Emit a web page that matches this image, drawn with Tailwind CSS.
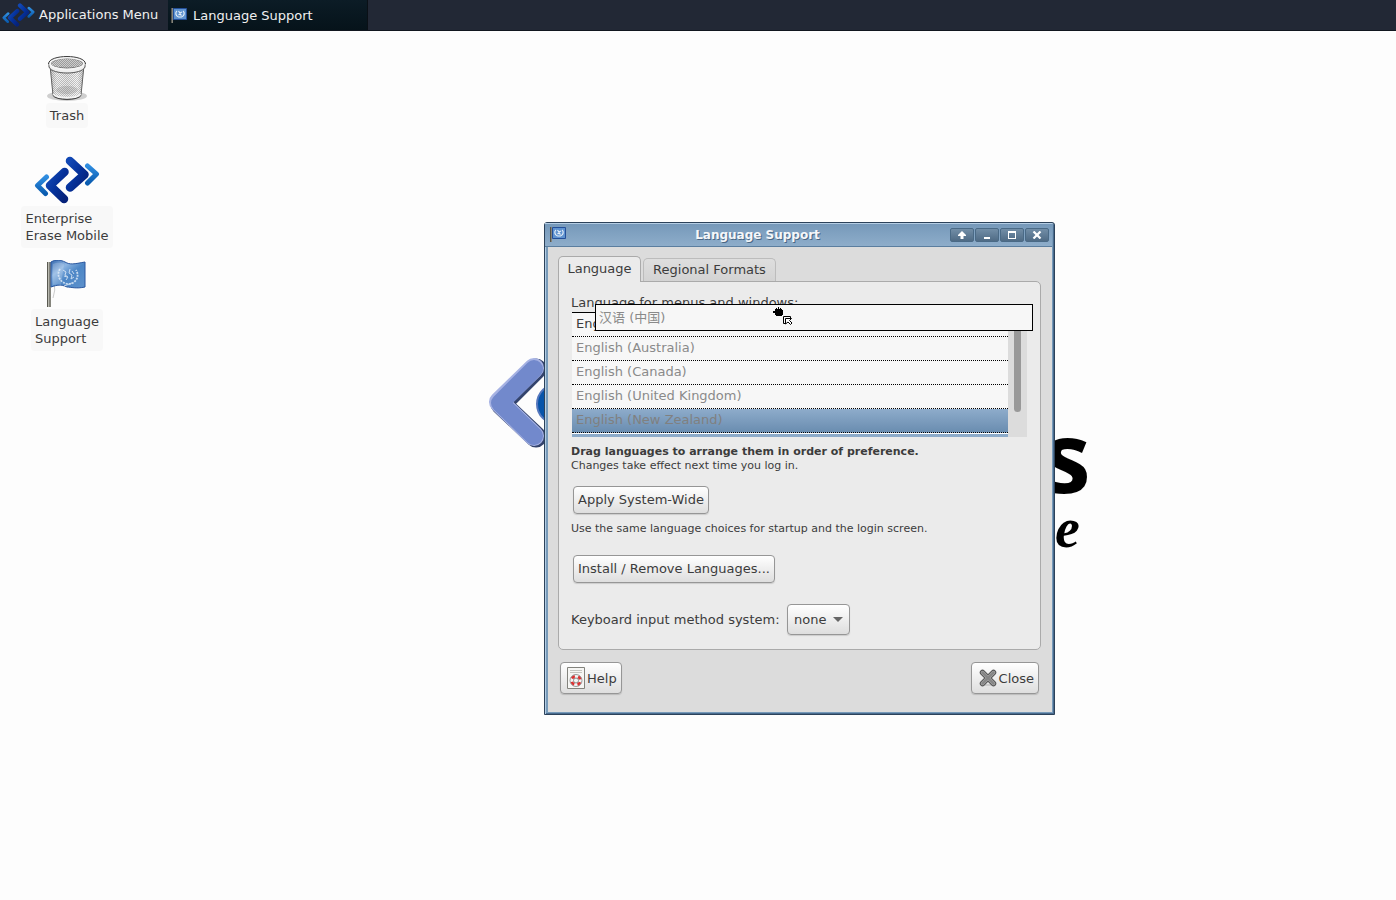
<!DOCTYPE html>
<html lang="en">
<head>
<meta charset="utf-8">
<title>Language Support</title>
<script src="https://cdn.jsdelivr.net/npm/@tailwindcss/browser@4"></script>
</head>
<body class="flex min-h-screen flex-col overflow-hidden bg-[#fdfdfd] font-['DejaVu_Sans','Noto_Sans_CJK_SC',sans-serif] text-[13px] leading-[17px] text-[#3c3c3c]">
<svg class="absolute h-0 w-0" aria-hidden="true">
  <defs>
    <linearGradient id="navy" x1="0" y1="0" x2="1" y2="1"><stop offset="0" stop-color="#1147b4"/><stop offset=".5" stop-color="#05319a"/><stop offset="1" stop-color="#06227a"/></linearGradient>
    <linearGradient id="sky" x1="0" y1="0" x2="0" y2="1"><stop offset="0" stop-color="#2f8de0"/><stop offset="1" stop-color="#0a5cb0"/></linearGradient>
    <linearGradient id="cloth" x1="0" y1="0" x2="1" y2="1"><stop offset="0" stop-color="#3568ad"/><stop offset=".3" stop-color="#8db5e2"/><stop offset=".55" stop-color="#4c86c6"/><stop offset="1" stop-color="#5e92cc"/></linearGradient>
    <linearGradient id="can" x1="0" y1="0" x2="1" y2="0"><stop offset="0" stop-color="#777"/><stop offset=".2" stop-color="#eee"/><stop offset=".5" stop-color="#ccc"/><stop offset=".8" stop-color="#fff"/><stop offset="1" stop-color="#777"/></linearGradient>
    <pattern id="mesh" width="2" height="2" patternUnits="userSpaceOnUse"><rect width="2" height="2" fill="#f2f2f2"/><rect width="1" height="1" fill="#aaa"/><rect x="1" y="1" width="1" height="1" fill="#aaa"/></pattern>
    <symbol id="arrows" viewBox="0 0 66 48">
      <g fill="none" stroke-linejoin="round" stroke-linecap="round">
        <path d="M12.500 21L3.500 29.500L11.500 37.500" stroke="url(#sky)" stroke-width="5"/>
        <path d="M53.500 10L62.500 18L53.500 27" stroke="url(#sky)" stroke-width="5"/>
        <path d="M30.500 16L16 29.500L30 43" stroke="url(#navy)" stroke-width="8.500"/>
        <path d="M36 5L50.500 18.500L36 31.500" stroke="url(#navy)" stroke-width="8.500"/>
      </g>
    </symbol>
    <symbol id="miniflag" viewBox="0 0 16 16">
      <path d="M0 1h2v15H0z" fill="#85857d"/><path d="M0 1h1v15H0z" fill="#55554f"/>
      <path d="M2.500 1.500h13v11h-13z" fill="#5f93d0" stroke="#244f99"/>
      <path d="M6 4c-2 1.500-1.500 5 1.500 6M12 4c2 1.500 1.500 5-1.500 6M7.500 4l1.500 2L11 5M7.500 8L9 7l1.500 1.500M7.500 10h3" fill="none" stroke="#e5eef8" stroke-width="1.200"/>
    </symbol>
  </defs>
</svg>

<header class="flex h-[31px] shrink-0 border-b border-[#11161f] bg-[#222835] text-[#f0f0f0]">
  <button type="button" class="flex w-[168px] items-center gap-1 pl-[2px] pb-[1px] text-left whitespace-nowrap"><svg class="h-6 w-[33px]"><use href="#arrows"/></svg>Applications Menu</button>
  <button type="button" class="flex w-[200px] items-center gap-[6px] border-r border-[#0a1016] bg-linear-to-b from-[#0c1c26] to-[#06131a] pl-[3px] text-left"><svg class="size-4"><use href="#miniflag"/></svg><span class="pt-[1px]">Language Support</span></button>
</header>

<main class="relative grow">
  <nav class="flex w-[134px] flex-col items-center pt-[23px]" aria-label="Desktop">
    <a href="#trash" class="flex flex-col items-center">
      <svg class="h-12 w-[44px]" viewBox="0 0 44 48">
        <ellipse cx="22" cy="42" rx="20" ry="5" fill="#000" opacity=".18"/>
        <path d="M5 11L8 41c3 5 25 5 28 0l3-30z" fill="url(#mesh)" stroke="#555"/>
        <path d="M5 11L8 41c3 5 25 5 28 0l3-30z" fill="url(#can)" opacity=".3"/>
        <ellipse cx="22" cy="36" rx="11" ry="4" fill="#777" opacity=".25"/>
        <path d="M8 40c3 5 25 5 28 0" fill="none" stroke="#f3f3f3" stroke-width="2"/>
        <path d="M7.500 41c3 6 26 6 29 0" fill="none" stroke="#444"/>
        <ellipse cx="22" cy="9.500" rx="18" ry="6" fill="#777"/>
        <ellipse cx="22" cy="10" rx="15.500" ry="5" fill="url(#mesh)" opacity=".7"/>
        <path d="M4 9v4c3 8 33 8 36 0V9c-4 7-32 7-36 0z" fill="#eee" stroke="#555"/>
        <ellipse cx="22" cy="9.500" rx="17" ry="6" fill="none" stroke="#f5f5f5" stroke-width="2"/>
        <path d="M3.500 10C3.500 0 40.500 0 40.500 10" fill="none" stroke="#3c3c3c"/>
      </svg>
      <span class="mt-[1px] rounded bg-[#f8f8f8] px-1 py-1">Trash</span>
    </a>
    <a href="#erase" class="mt-7 flex flex-col items-center">
      <svg class="h-12 w-[66px]"><use href="#arrows"/></svg>
      <span class="mt-[2px] rounded bg-[#f8f8f8] px-1 py-1">Enterprise<br>Erase Mobile</span>
    </a>
    <a href="#language" class="mt-3 flex flex-col items-center">
      <svg class="h-12 w-12" viewBox="0 0 48 48">
        <path d="M11 22q2 8-1 16" fill="none" stroke="#ccc"/>
        <path d="M4 2h4v45H4z" fill="#85857d"/><path d="M5.500 2v45" stroke="#b9b9b0"/><path d="M4.500 2v45" stroke="#5a5a52"/>
        <path d="M8 2c5-3 10-2 14 0 5 3 9 2 20 0v25c-9 2-14 0-18 0-6-3-10-2-16 0z" fill="url(#cloth)" stroke="#2a579f"/>
        <path d="M10 4c4-2 8-1.500 11 0l-3 21c-3-1-5-.5-8 0z" fill="#fff" opacity=".18"/>
        <g fill="none" stroke="#e5effa" opacity=".8"><path d="M17 9c-4 6 0 14 8 15 8 0 12-8 8-14" stroke-width="1.800" stroke-dasharray="2 1"/><path d="M20 10l3 2-1 3 3 2-2 3M27 9l-1 4 3 2-1 4 3-2M21 16l3 1M29 11l2 3"/><path d="M21 26l8-3"/></g>
      </svg>
      <span class="mt-[1px] rounded bg-[#f8f8f8] px-1 py-1">Language<br>Support</span>
    </a>
  </nav>

  <!-- Wallpaper artwork, partly hidden behind the window -->
  <svg class="absolute top-[319px] left-[484px] h-[110px] w-[120px]" viewBox="0 0 120 110" fill="none" stroke-linecap="round" stroke-linejoin="round">
    <path d="M52 19L17 54L52 87" stroke="#33436c" stroke-width="21"/>
    <path d="M50 18L15 52L50 86" stroke="#a6b2e3" stroke-width="20"/>
    <path d="M50 19L16 53L50 86" stroke="#7289cc" stroke-width="18"/>
    <circle cx="73" cy="54" r="20" fill="#0754aa" stroke="#5577bd" stroke-width="2"/>
  </svg>
  <span class="absolute top-[380px] left-[1042px] font-['Open_Sans',sans-serif] text-[98px] leading-[88px] font-bold text-black">s</span>
  <span class="absolute top-[473px] left-[1055px] font-['Liberation_Serif',serif] text-[56px] leading-[48px] font-bold text-black italic">e</span>

  <section class="absolute top-[191px] left-[544px] w-[511px] rounded-t-[3px] border border-[#2c425a] bg-[#779ab9] pr-[2px] pb-[2px] shadow-[inset_1px_1px_0_#b4cde4,inset_-1px_-1px_0_#496b8e]" aria-label="Language Support">
    <div class="flex h-6 items-center border-b border-[#5b7e9f] bg-linear-to-b from-[#7598b9] to-[#8eadca] pr-[3px] pl-[5px] shadow-[inset_0_1px_0_#b4cde4]">
      <svg class="mb-[2px] size-4"><use href="#miniflag"/></svg>
      <h1 class="grow pt-[1px] text-center text-[12px] font-bold text-[#f5f7fa] [text-shadow:1px_1px_0_#4a6785]">Language Support</h1>
      <div class="flex gap-[1px] pl-[1px]">
        <button type="button" aria-label="Shade" class="flex h-[14px] w-6 items-center justify-center rounded-[2px] border border-[#4a6a86] bg-linear-to-b from-[#728ea7] to-[#4f6b85]"><svg class="h-2 w-[10px]" viewBox="0 0 10 8"><path d="M5 0l4 4v1H6.500v3h-3V5H1V4z" fill="#fff"/></svg></button>
        <button type="button" aria-label="Minimize" class="flex h-[14px] w-6 items-center justify-center rounded-[2px] border border-[#4a6a86] bg-linear-to-b from-[#728ea7] to-[#4f6b85]"><svg class="h-2 w-[10px]" viewBox="0 0 10 8"><path d="M2 6h6v2H2z" fill="#fff"/></svg></button>
        <button type="button" aria-label="Maximize" class="flex h-[14px] w-6 items-center justify-center rounded-[2px] border border-[#4a6a86] bg-linear-to-b from-[#728ea7] to-[#4f6b85]"><svg class="h-2 w-[10px]" viewBox="0 0 10 8"><path d="M1 0h8v8H1zM2 2v5h6V2z" fill="#fff" fill-rule="evenodd"/></svg></button>
        <button type="button" aria-label="Close window" class="flex h-[14px] w-6 items-center justify-center rounded-[2px] border border-[#4a6a86] bg-linear-to-b from-[#728ea7] to-[#4f6b85]"><svg class="h-2 w-[10px]" viewBox="0 0 10 8"><path d="M1.500.500l7 7M8.500.500l-7 7" stroke="#fff" stroke-width="2.200"/></svg></button>
      </div>
    </div>

    <div class="ml-[3px] bg-[#dcdcdc] pt-[9px] pr-[11px] pb-[18px] pl-[10px]">
      <div role="tablist" class="flex items-end gap-[2px]">
        <button type="button" role="tab" aria-selected="true" class="relative z-10 -mb-[1px] h-[26px] w-[83px] rounded-t-[5px] border border-b-0 border-[#aaa] bg-[#ebebeb] pb-[2px]">Language</button>
        <button type="button" role="tab" aria-selected="false" class="h-[23px] w-[133px] rounded-t-[5px] border border-b-0 border-[#bcbcbc] bg-linear-to-b from-[#dedede] to-[#d3d3d3] pb-[2px]">Regional Formats</button>
      </div>

      <div role="tabpanel" class="rounded-[5px] rounded-tl-none border border-[#aaa] bg-[#ebebeb] px-3 pt-3 pb-[14px]">
        <h2 class="pb-[1px]">Language for menus and windows:</h2>
        <div class="relative mr-[1px] ml-[1px]">
          <div class="flex h-[125px] overflow-hidden">
            <ul class="grow border-t border-black bg-[#f7f7f7] text-[#8a8a8a]">
              <li class="h-6 border-b border-dotted border-black pt-[2px] pl-1 text-[#3c3c3c]">English</li>
              <li class="h-6 border-b border-dotted border-black pt-[2px] pl-1">English (Australia)</li>
              <li class="h-6 border-b border-dotted border-black pt-[2px] pl-1">English (Canada)</li>
              <li class="h-6 border-b border-dotted border-black pt-[2px] pl-1">English (United Kingdom)</li>
              <li class="h-6 border-b border-dotted border-black bg-linear-to-b from-[#8eaccb] to-[#6a8db0] pt-[2px] pl-1 text-[#808080]">English (New Zealand)</li>
              <li class="h-6 border-t border-white bg-[#8cabca]"></li>
            </ul>
            <div class="w-[19px] bg-[#dcdcdc] pl-[6px]"><div class="h-[100px] w-[7px] rounded-full bg-[#999]"></div></div>
          </div>
          <!-- Row being dragged, with the grabbing cursor -->
          <div class="absolute -top-2 -right-[6px] left-[23px] border border-black bg-[#f7f7f7] py-1 pl-[3px] text-[#8a8a8a]">汉语 (中国)
            <svg class="absolute top-0 left-[176px] h-[22px] w-[22px]" viewBox="0 0 22 22">
              <path d="M1 6h2V4h1V3h1v1h1V2h1v2h1V3h1v1h1v1h1v5h-1v1H4v-1H3V8H1z" fill="#000"/>
              <path d="M18.500 14v-2.500h-7v7H14" fill="none" stroke="#000"/><path d="M13.500 13.500h6l-2 2 2.500 2.500-1.500 1.500-2.500-2.500-2.500 2z" fill="#fff" stroke="#000"/>
            </svg>
          </div>
        </div>
        <p class="mt-2 text-[11px] leading-[14px] font-bold">Drag languages to arrange them in order of preference.</p>
        <p class="text-[11px] leading-[14px]">Changes take effect next time you log in.</p>
        <button type="button" class="mt-[13px] ml-[2px] block h-7 rounded border border-[#969696] bg-linear-to-b from-white to-[#dedede] px-1 pb-[2px] whitespace-nowrap shadow-[0_1px_1px_#ccc]">Apply System-Wide</button>
        <p class="mt-2 text-[11px] leading-[14px]">Use the same language choices for startup and the login screen.</p>
        <button type="button" class="mt-[19px] ml-[2px] block h-7 rounded border border-[#969696] bg-linear-to-b from-white to-[#dedede] px-1 pb-[2px] whitespace-nowrap shadow-[0_1px_1px_#ccc]">Install / Remove Languages...</button>
        <div class="mt-[21px] flex items-center">
          <label for="ims" class="w-[216px] whitespace-nowrap">Keyboard input method system:</label>
          <div class="relative">
            <select id="ims" class="h-[31px] w-[63px] appearance-none rounded border border-[#969696] bg-linear-to-b from-white to-[#dedede] pl-[6px] shadow-[0_1px_1px_#ccc]"><option>none</option></select>
            <svg class="pointer-events-none absolute top-[13px] right-[7px] h-[5px] w-[10px]" viewBox="0 0 10 5"><path d="M0 0h10L5 5z" fill="#666"/></svg>
          </div>
        </div>
      </div>

      <div class="mt-3 flex justify-between px-[2px]">
        <button type="button" class="flex h-8 items-center gap-[2px] rounded border border-[#969696] bg-linear-to-b from-white to-[#dedede] pr-1 pl-[6px] shadow-[0_1px_1px_#bbb]">
          <svg class="h-[22px] w-[18px]" viewBox="0 0 18 22"><path d="M.5.500h17v21H.5z" fill="#f6f6f4" stroke="#83837d"/><path d="M3 3.500h12M3 5.500h12" stroke="#c5c5c0"/><circle cx="9" cy="13.500" r="4.500" fill="none" stroke="#f5f5f5" stroke-width="3"/><circle cx="9" cy="13.500" r="4.500" fill="none" stroke="#dd3030" stroke-width="3" stroke-dasharray="3.530" stroke-dashoffset="-1.760"/><circle cx="9" cy="13.500" r="6" fill="none" stroke="#999"/><circle cx="9" cy="13.500" r="2.500" fill="none" stroke="#888"/></svg>Help
        </button>
        <button type="button" class="flex h-8 items-center gap-[2px] rounded border border-[#969696] bg-linear-to-b from-white to-[#dedede] pr-1 pl-[7px] shadow-[0_1px_1px_#bbb]">
          <svg class="h-5 w-[18px]" viewBox="0 0 18 20" stroke-linecap="round"><path d="M4 17h12" stroke="#ccc" stroke-width="2"/><path d="M3.500 4.500l11 11M14.500 4.500l-11 11" stroke="#565656" stroke-width="5.500"/><path d="M3.500 4.500l11 11M14.500 4.500l-11 11" stroke="#a5a5a5" stroke-width="3.500"/><path d="M3.500 4.500l11 11M14.500 4.500l-11 11" stroke="#858585" stroke-width="2"/></svg>Close
        </button>
      </div>
    </div>
  </section>
</main>
</body>
</html>
